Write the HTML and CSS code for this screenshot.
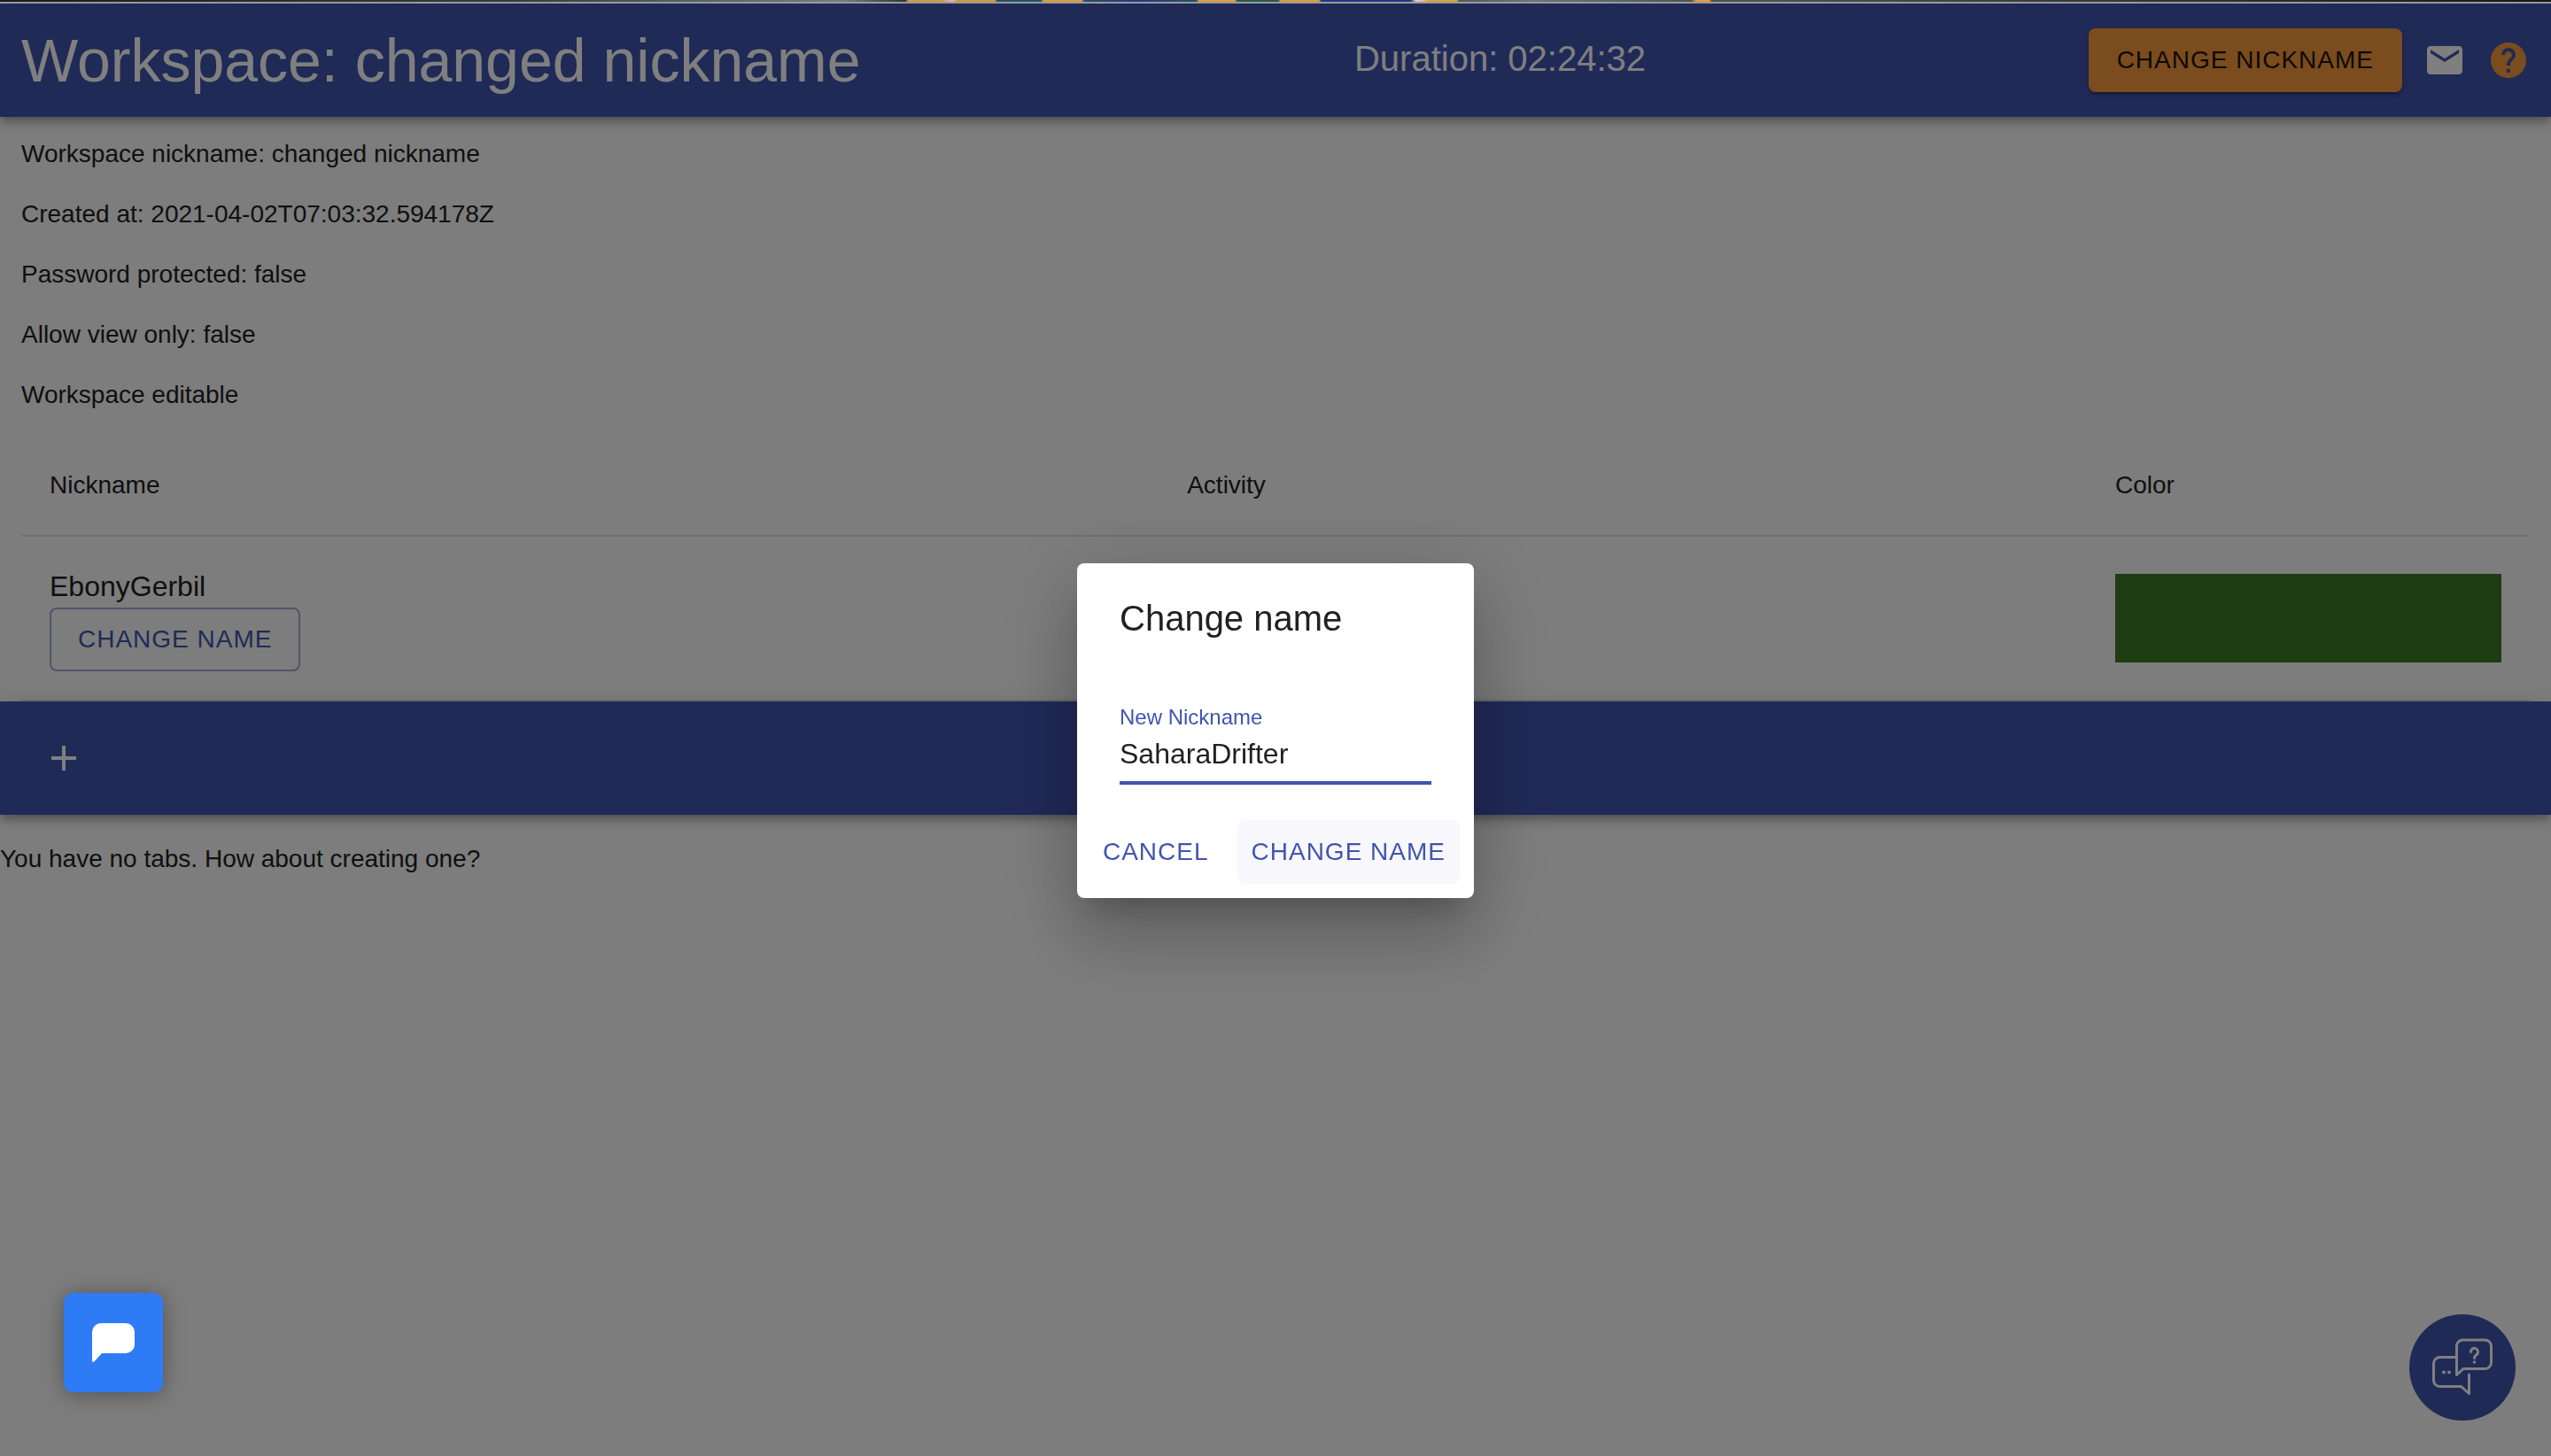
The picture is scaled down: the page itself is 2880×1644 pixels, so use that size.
FILE: index.html
```html
<!DOCTYPE html>
<html lang="en">
<head>
<meta charset="utf-8">
<title>Workspace: changed nickname</title>
<link rel="stylesheet" href="styles.css">
</head>
<body>
<div class="page">
  <div class="strip"></div>
  <header class="bar header">
    <h1 class="title">Workspace: changed nickname</h1>
    <p class="duration">Duration: 02:24:32</p>
    <div class="tools">
      <button class="btn btn-accent" type="button">CHANGE NICKNAME</button>
      <a class="icon-link" href="#mail" aria-label="Mail"><svg class="icon" viewBox="0 0 24 24"><path d="M20 4H4c-1.100 0-1.990.9-1.990 2L2 18c0 1.100.9 2 2 2h16c1.100 0 2-.9 2-2V6c0-1.100-.9-2-2-2zm0 4l-8 5-8-5V6l8 5 8-5v2z"/></svg></a>
      <a class="icon-link accent" href="#help" aria-label="Help"><svg class="icon" viewBox="0 0 24 24"><path d="M12 2C6.480 2 2 6.480 2 12s4.480 10 10 10 10-4.480 10-10S17.520 2 12 2zm1 17h-2v-2h2v2zm2.070-7.750l-.9.920C13.450 12.900 13 13.500 13 15h-2v-.5c0-1.100.450-2.100 1.170-2.830l1.240-1.260c.370-.360.590-.860.590-1.410 0-1.100-.9-2-2-2s-2 .9-2 2H8c0-2.210 1.790-4 4-4s4 1.790 4 4c0 .880-.360 1.680-.930 2.250z"/></svg></a>
    </div>
  </header>

  <main>
    <section class="info">
      <p>Workspace nickname: changed nickname</p>
      <p>Created at: 2021-04-02T07:03:32.594178Z</p>
      <p>Password protected: false</p>
      <p>Allow view only: false</p>
      <p>Workspace editable</p>
    </section>

    <div class="table-wrap">
      <table class="users">
        <thead>
          <tr><th class="col-name">Nickname</th><th class="col-activity">Activity</th><th class="col-color">Color</th></tr>
        </thead>
        <tbody>
          <tr>
            <td><div class="user">EbonyGerbil</div><button class="btn btn-outlined" type="button">CHANGE NAME</button></td>
            <td></td>
            <td><div class="swatch"></div></td>
          </tr>
        </tbody>
      </table>
    </div>

    <nav class="bar tabs">
      <button class="add" type="button" aria-label="Add tab"><svg class="icon" viewBox="0 0 24 24"><path d="M19 13h-6v6h-2v-6H5v-2h6V5h2v6h6v2z"/></svg></button>
    </nav>
    <p class="empty">You have no tabs. How about creating one?</p>
  </main>
</div>

<button class="support" type="button" aria-label="Support">
  <svg class="support-icon" viewBox="-1 1 72 68"><g fill="none" stroke="currentColor" stroke-width="3" stroke-linecap="round" stroke-linejoin="round"><path d="M28.500 43.500V11a7 7 0 0 1 7-7h25a7 7 0 0 1 7 7v18.500a7 7 0 0 1-7 7H36z"/><path d="M27 23.500H9.500a7 7 0 0 0-7 7v19a7 7 0 0 0 7 7H33.500l9 8V43"/><path d="M44.500 17.500a4 4 0 1 1 6.500 3c-1.500 1.200-2.500 2-2.500 4"/></g><g fill="currentColor"><circle cx="48.500" cy="29" r="1.800"/><circle cx="14" cy="40.500" r="1.900"/><circle cx="20" cy="40.500" r="1.900"/></g></svg>
</button>

<div class="backdrop">
  <form class="dialog" role="dialog" aria-labelledby="dialog-title">
    <h2 class="dialog-title" id="dialog-title">Change name</h2>
    <div class="dialog-body">
      <label class="label" for="nickname">New Nickname</label>
      <input class="input" id="nickname" type="text" value="SaharaDrifter">
    </div>
    <div class="dialog-actions">
      <button class="btn btn-text" type="button">CANCEL</button>
      <button class="btn btn-text hovered" type="button">CHANGE NAME</button>
    </div>
  </form>
</div>

<button class="chat" type="button" aria-label="Open chat">
  <svg class="chat-icon" viewBox="0 0 48 44"><path d="M10 0H38a10 10 0 0 1 10 10V24a10 10 0 0 1-10 10H11L2.500 43.300Q0 45 0 42V10A10 10 0 0 1 10 0z" fill="#fff"/></svg>
</button>
</body>
</html>
```
FILE: styles.css
```css
:root {
  --primary: #4154af;
  --accent: #f4993c;
  --ink: #212121;
}

* { box-sizing: border-box; }

body {
  margin: 0;
  min-height: 100vh;
  background: #fafafa;
  color: var(--ink);
  font: 28px/40px "Liberation Sans", Arial, Helvetica, sans-serif;
}

h1, h2, p { margin: 0; font-weight: 400; }

button { font: inherit; color: inherit; border: 0; background: none; padding: 0; }

.strip {
  position: relative;
  z-index: 2;
  height: 4px;
  border-bottom: 2px solid #9a9a9a;
  background: linear-gradient(90deg,
    #151a1c 0, #333d3d 20%, #6f8080 33%, #303636 35.5%,
    #d09a3a 35.6% 36.9%, #d9b0b8 37.2% 37.4%, #d09a3a 37.5% 39%,
    #24506a 39.1% 40.8%, #d99d3c 40.9% 42.4%,
    #24506a 42.5%, #1f3a86 44.5%, #24506a 46.9%, #e0a040 47% 48.4%,
    #2a5a50 48.5% 50.1%, #d99d3c 50.2% 51.7%,
    #1f3a86 51.8% 55.3%, #e0c4c4 55.5% 55.7%, #dca23c 56% 57.1%,
    #505c5c 57.2%, #66767a 60%, #4c5656 66.3%,
    #ee9a3c 66.5% 67%, #4c5656 67.1%, #2c3434 85%, #141616 100%);
}

.bar {
  position: relative;
  min-height: 128px;
  background: var(--primary);
  color: #fff;
  box-shadow: 0 4px 8px -2px rgba(0, 0, 0, .2), 0 8px 10px rgba(0, 0, 0, .14), 0 2px 20px rgba(0, 0, 0, .12);
}

.header {
  display: grid;
  grid-template-columns: 53% 1fr auto;
  align-items: center;
  padding: 0 24px;
}

.title { font-size: 68px; line-height: 84px; }
.duration { padding: 0 4px 4px; font-size: 40px; line-height: 60px; }

.tools { display: flex; align-items: center; gap: 24px; }
.icon { display: block; width: 48px; height: 48px; fill: currentColor; }
.icon-link { color: #fff; }
.icon-link.accent { color: var(--accent); }

.btn {
  height: 72px;
  padding: 0 32px;
  border-radius: 8px;
  letter-spacing: 1px;
  line-height: 48px;
  white-space: nowrap;
}

.btn-accent {
  background: var(--accent);
  color: #1e1308;
  box-shadow: 0 6px 2px -4px rgba(0, 0, 0, .2), 0 4px 4px rgba(0, 0, 0, .14), 0 2px 10px rgba(0, 0, 0, .12);
}

.btn-outlined {
  display: block;
  padding: 0 30px;
  border: 2px solid #a0a8d6;
  color: var(--primary);
}

.btn-text { padding: 0 16px; color: var(--primary); }
.btn-text.hovered { background: #f7f7fc; }

.info { display: grid; gap: 28px; padding: 22px 24px 26px; }

.table-wrap { padding: 0 24px; }
.users { width: 100%; border-collapse: separate; border-spacing: 0; table-layout: fixed; }
.users th, .users td {
  padding: 32px;
  border-bottom: 2px solid #e0e0e0;
  text-align: left;
  vertical-align: middle;
  font-weight: 400;
}
.users th { line-height: 48px; }
.col-activity { width: 37%; }
.col-color { width: 500px; }
.user { font-size: 32px; line-height: 48px; }
.swatch { height: 100px; background: #3a7822; }

.tabs { display: flex; align-items: center; padding: 0 48px; }
.empty { padding: 30px 0; }

.support {
  position: fixed;
  right: 40px;
  bottom: 40px;
  display: grid;
  place-items: center;
  width: 120px;
  height: 120px;
  border-radius: 50%;
  background: var(--primary);
  color: #fff;
}
.support-icon { width: 72px; height: 68px; }

.backdrop {
  position: fixed;
  inset: 0;
  display: grid;
  place-items: center;
  padding-top: 6px;
  background: rgba(0, 0, 0, .5);
}

.dialog {
  width: 448px;
  border-radius: 8px;
  background: #fff;
  box-shadow: 0 22px 30px -14px rgba(0, 0, 0, .2), 0 48px 76px 6px rgba(0, 0, 0, .14), 0 18px 92px 16px rgba(0, 0, 0, .12);
}
.dialog-title { padding: 32px 48px 36px; font-size: 40px; line-height: 60px; }
.dialog-body { display: grid; padding: 32px 48px 24px; }
.label { color: var(--primary); font-size: 24px; line-height: 28px; }
.input {
  width: 100%;
  height: 62px;
  padding: 0 0 4px;
  border: 0;
  border-bottom: 4px solid var(--primary);
  outline: 0;
  background: none;
  color: var(--ink);
  font: 32px/40px "Liberation Sans", Arial, Helvetica, sans-serif;
}
.dialog-actions { display: flex; justify-content: flex-end; gap: 16px; padding: 16px; }

.chat {
  position: fixed;
  left: 72px;
  bottom: 72px;
  display: grid;
  place-items: center;
  width: 112px;
  height: 112px;
  border-radius: 10px;
  background: #2e7bf6;
  box-shadow: 0 2px 24px rgba(0, 0, 0, .35);
}
.chat-icon { width: 48px; height: 44px; }
```
